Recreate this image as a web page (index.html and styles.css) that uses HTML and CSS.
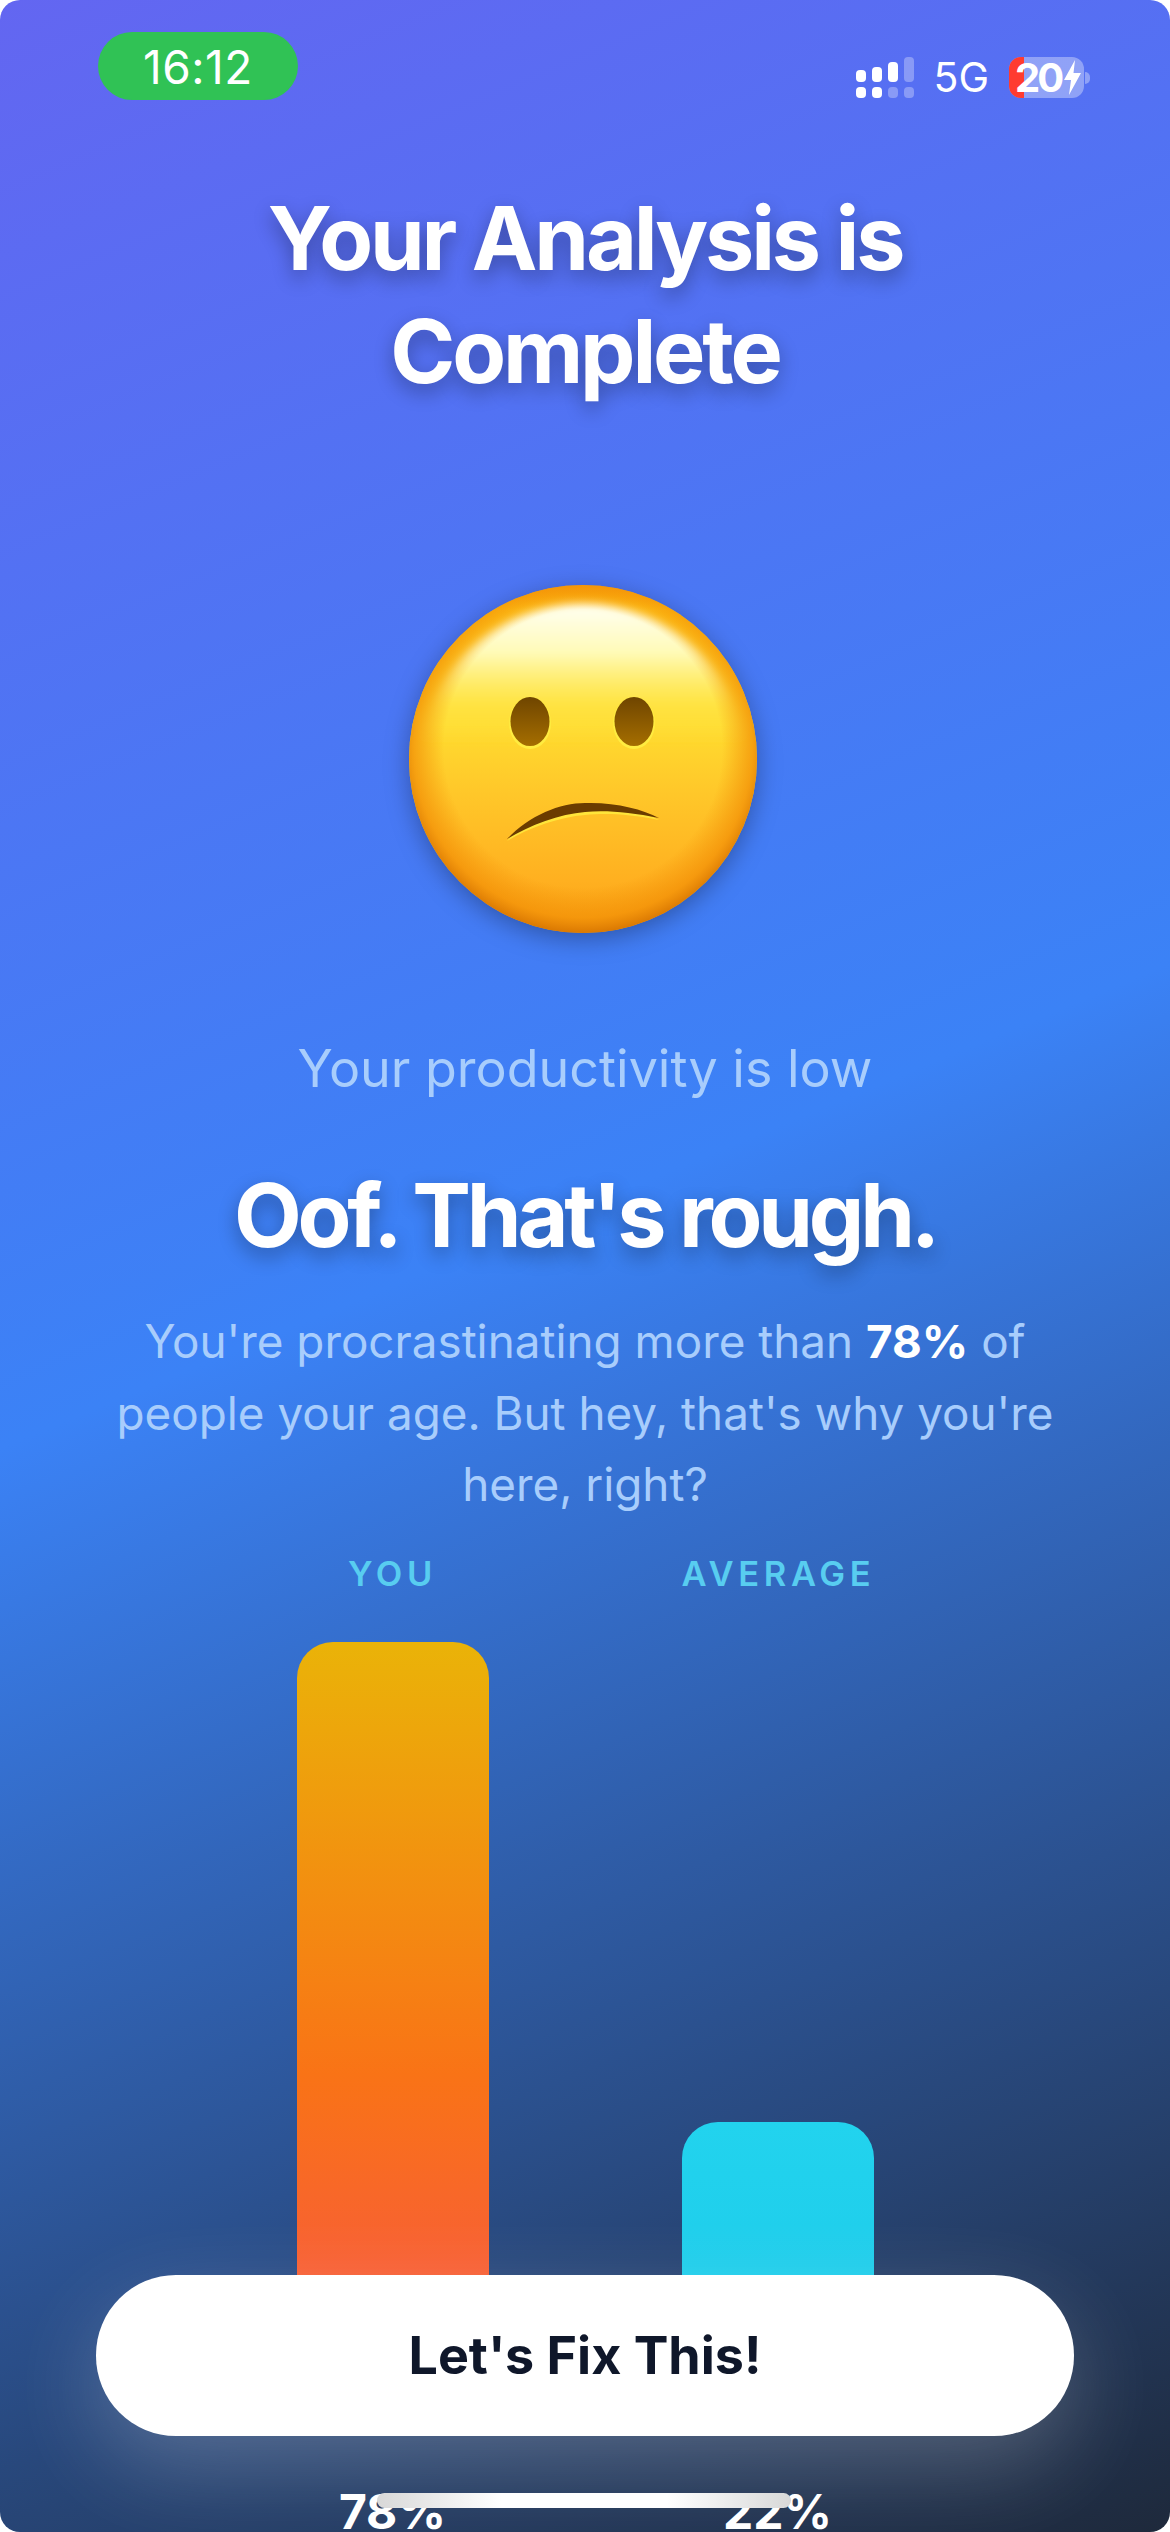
FILE: index.html
```html
<!DOCTYPE html>
<html lang="en">
<head>
<meta charset="utf-8">
<title>Your Analysis is Complete</title>
<link rel="stylesheet" href="styles.css">
</head>
<body>
<main class="screen">
  <header class="status">
    <div class="clock">16:12</div>
    <div class="status-right">
      <svg class="signal" width="58" height="42" viewBox="0 0 58 42" aria-hidden="true">
        <rect x="0" y="13" width="10" height="12" rx="4" fill="#fff"/>
        <rect x="16" y="10" width="10" height="15" rx="4" fill="#fff"/>
        <rect x="32" y="5" width="10" height="20" rx="4" fill="#fff"/>
        <rect x="48" y="0" width="10" height="25" rx="4" fill="#fff" fill-opacity=".3"/>
        <rect x="0" y="30" width="10" height="11" rx="4" fill="#fff"/>
        <rect x="16" y="30" width="10" height="11" rx="4" fill="#fff"/>
        <rect x="32" y="30" width="10" height="11" rx="4" fill="#fff" fill-opacity=".3"/>
        <rect x="48" y="30" width="10" height="11" rx="4" fill="#fff" fill-opacity=".3"/>
      </svg>
      <span class="network">5G</span>
      <div class="battery">
        <span class="battery-red"></span>
        <span class="battery-num">20</span>
        <svg class="bolt" width="17" height="35" viewBox="0 0 17 35" aria-hidden="true"><path d="M11 0 L0 20 H7 L5 35 L17 13 H9.5 Z" fill="#fff"/></svg>
        <span class="battery-nub"></span>
      </div>
    </div>
  </header>

  <h1 class="title">Your Analysis is<br>Complete</h1>

  <svg class="emoji" width="400" height="400" viewBox="5 0 400 400" aria-hidden="true">
    <defs>
      <linearGradient id="face" x1="0" y1="0" x2="0" y2="1">
        <stop offset="0" stop-color="#f79a08"/>
        <stop offset=".07" stop-color="#ffc414"/>
        <stop offset=".4" stop-color="#ffdc30"/>
        <stop offset=".58" stop-color="#ffc92a"/>
        <stop offset=".85" stop-color="#ffb020"/>
        <stop offset="1" stop-color="#f9a012"/>
      </linearGradient>
      <linearGradient id="shine" gradientUnits="userSpaceOnUse" x1="0" y1="43" x2="0" y2="185">
        <stop offset="0" stop-color="#fffff4"/>
        <stop offset=".35" stop-color="#fffbb8"/>
        <stop offset=".7" stop-color="#ffea50" stop-opacity=".7"/>
        <stop offset="1" stop-color="#ffe03a" stop-opacity="0"/>
      </linearGradient>
      <radialGradient id="rim" cx="50%" cy="47%" r="54%">
        <stop offset=".74" stop-color="#f39208" stop-opacity="0"/>
        <stop offset=".9" stop-color="#f39208" stop-opacity=".75"/>
        <stop offset="1" stop-color="#d27000"/>
      </radialGradient>
      <linearGradient id="eye" x1="0" y1="0" x2="0" y2="1">
        <stop offset="0" stop-color="#6f4500"/>
        <stop offset="1" stop-color="#a56e00"/>
      </linearGradient>
      <filter id="soft" x="-10%" y="-10%" width="120%" height="120%"><feGaussianBlur stdDeviation="4"/></filter>
    </defs>
    <circle cx="203" cy="199" r="174" fill="url(#face)"/>
    <circle cx="203" cy="208" r="165" fill="url(#shine)" filter="url(#soft)"/>
    <circle cx="203" cy="199" r="174" fill="url(#rim)"/>
    <ellipse cx="150" cy="163" rx="21" ry="26" fill="#ffec40"/>
    <ellipse cx="254" cy="163" rx="21" ry="26" fill="#ffec40"/>
    <ellipse cx="150" cy="161.500" rx="19.500" ry="24.500" fill="url(#eye)"/>
    <ellipse cx="254" cy="161.500" rx="19.500" ry="24.500" fill="url(#eye)"/>
    <path d="M127 281 C150 256 180 246 205 245 C235 244 262 251 279 260 C250 254 225 253 205 255 C180 257 150 267 127 281 Z" fill="#ffe53a"/>
    <path d="M127 279 C150 255 180 243 205 243 C235 242 262 249 279 258 C250 252 225 250 205 252 C180 254 150 265 127 279 Z" fill="#6b3c00"/>
  </svg>

  <p class="tagline">Your productivity is low</p>
  <h2 class="headline">Oof. That's rough.</h2>
  <p class="body-copy">You're procrastinating more than <strong>78%</strong> of people your age. But hey, that's why you're here, right?</p>

  <section class="chart">
    <div class="col">
      <div class="label">YOU</div>
      <div class="track">
        <div class="bar bar-you"></div>
        <div class="value">78%</div>
      </div>
    </div>
    <div class="col">
      <div class="label">AVERAGE</div>
      <div class="track">
        <div class="bar bar-avg"></div>
        <div class="value">22%</div>
      </div>
    </div>
  </section>

  <button class="cta">Let's Fix This!</button>
  <div class="home"></div>
</main>
</body>
</html>
```
FILE: styles.css
```css
* { box-sizing: border-box; }
html, body { margin: 0; padding: 0; background: #fff; }
.screen {
  position: relative;
  width: 1170px;
  height: 2532px;
  overflow: hidden;
  border-radius: 20px;
  background: linear-gradient(157.5deg, #6366f1 0%, #3b82f6 48%, #1e293b 100%);
  font-family: Inter, "Liberation Sans", sans-serif;
  color: #fff;
  text-align: center;
}
.status {
  display: flex;
  justify-content: space-between;
  align-items: flex-start;
  padding: 32px 86px 0 98px;
  height: 182px;
}
.clock {
  width: 200px;
  height: 68px;
  border-radius: 34px;
  background: #30c255;
  font-size: 46px;
  line-height: 70px;
  letter-spacing: .5px;
}
.status-right {
  display: flex;
  align-items: center;
  margin-top: 25px;
  height: 41px;
}
.signal { margin-right: 19px; flex: none; }
.network { font-size: 41px; line-height: 41px; margin-right: 20px; }
.battery {
  position: relative;
  display: flex;
  align-items: center;
  width: 75px;
  height: 41px;
  border-radius: 12px;
  background: rgba(255,255,255,.35);
}
.battery-red {
  position: absolute;
  left: 0;
  top: 0;
  bottom: 0;
  width: 15px;
  background: #ff3b30;
  border-radius: 12px 0 0 12px;
}
.battery-num {
  position: relative;
  margin-left: 6px;
  font-size: 40px;
  font-weight: 700;
  line-height: 41px;
  letter-spacing: -3px;
}
.bolt { position: relative; margin-left: 3px; flex: none; }
.battery-nub {
  position: absolute;
  right: -6px;
  top: 15px;
  width: 5px;
  height: 12px;
  background: rgba(255,255,255,.35);
  border-radius: 0 5px 5px 0;
}
.title {
  margin: 0;
  font-size: 88px;
  font-weight: 700;
  line-height: 113px;
  letter-spacing: -3.2px;
  text-shadow: 0 8px 20px rgba(0,0,0,.32);
}
.emoji {
  display: block;
  margin: 152px auto 0;
  filter: drop-shadow(0 6px 12px rgba(0,0,0,.3));
}
.tagline {
  margin: 73px 0 0;
  font-size: 52px;
  line-height: 72px;
  color: #a8cdfc;
}
.headline {
  margin: 56px 0 0;
  font-size: 88px;
  font-weight: 700;
  line-height: 108px;
  letter-spacing: -4.2px;
  text-shadow: 0 8px 20px rgba(0,0,0,.32);
}
.body-copy {
  width: 1000px;
  margin: 37px auto 0;
  font-size: 45.800px;
  line-height: 71.5px;
  color: #a8cdfc;
}
.body-copy strong { color: #fff; font-weight: 700; }
.chart {
  display: flex;
  justify-content: center;
  gap: 193px;
  margin-top: 31px;
}
.col { width: 192px; }
.label {
  font-size: 34.5px;
  font-weight: 600;
  line-height: 44px;
  letter-spacing: 4.6px;
  color: #58cdf0;
  white-space: nowrap;
}
.track {
  display: flex;
  flex-direction: column;
  justify-content: flex-end;
  height: 900px;
  margin-top: 46px;
}
.bar { border-radius: 36px 36px 0 0; }
.bar-you { height: 786px; background: linear-gradient(180deg, #eab308 0%, #f97316 55%, #f75c3a 85%, #f75c3a 100%); }
.bar-avg { height: 306px; background: linear-gradient(180deg, #22d3ee 0%, #1cc8e8 100%); }
.value {
  font-size: 48px;
  font-weight: 700;
  line-height: 60px;
  margin-top: 54px;
}
.cta {
  position: absolute;
  left: 96px;
  top: 2275px;
  width: 978px;
  height: 161px;
  border: 0;
  border-radius: 80px;
  background: #fff;
  color: #0f172a;
  font-family: inherit;
  font-size: 52px;
  font-weight: 700;
  box-shadow: 0 30px 90px rgba(255,255,255,.22);
}
.home {
  position: absolute;
  left: 377px;
  top: 2493px;
  width: 414px;
  height: 15px;
  border-radius: 15px;
  background: linear-gradient(90deg, #d8d8d8 0%, #fff 30%, #fff 70%, #d8d8d8 100%);
}
```
